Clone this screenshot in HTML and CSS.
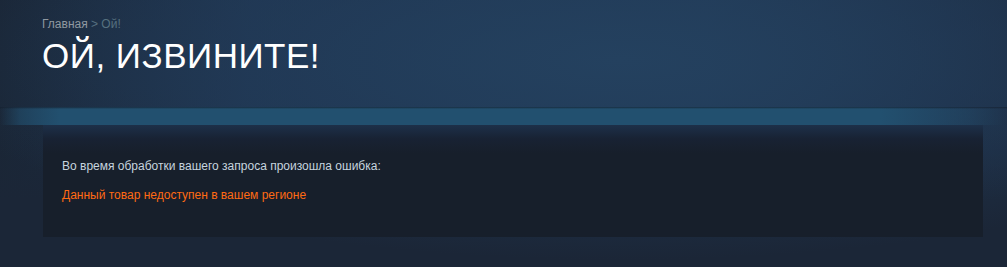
FILE: index.html
```html
<!DOCTYPE html>
<html lang="ru">
<head>
<meta charset="utf-8">
<link rel="stylesheet" href="styles.css">
</head>
<body>
<div class="page">
  <div class="header">
    <div class="breadcrumbs"><span class="crumb">Главная</span> <span class="sep">&gt; Ой!</span></div>
    <h1 class="title">ОЙ, ИЗВИНИТЕ!</h1>
  </div>
  <div class="band">
    <div class="box">
      <p class="msg">Во время обработки вашего запроса произошла ошибка:</p>
      <p class="err">Данный товар недоступен в вашем регионе</p>
    </div>
  </div>
</div>
</body>
</html>
```
FILE: styles.css
```css
html, body { margin: 0; padding: 0; }
body {
  width: 1007px;
  height: 267px;
  overflow: hidden;
  font-family: "Liberation Sans", Arial, sans-serif;
  background: #1b2637;
}
.page {
  height: 267px;
  background:
    radial-gradient(ellipse 700px 200px at 620px 60px, #24415f 0%, rgba(34,60,90,0.6) 50%, rgba(27,38,55,0) 100%),
    linear-gradient(180deg, rgba(27,38,55,0) 0px, rgba(27,38,55,0) 120px, #1b2637 200px),
    linear-gradient(90deg, #1a2636 0%, #1f3550 25%, #223c58 70%, #1d2d43 100%);
  background-color: #1b2637;
}
.header {
  padding: 16px 0 0 42px;
  height: 91px;
  box-sizing: border-box;
}
.breadcrumbs {
  font-size: 12px;
  line-height: 16px;
  color: #8f98a0;
}
.sep { color: #56707f; }
.title {
  margin: 4px 0 0 0;
  font-weight: normal;
  font-size: 35px;
  line-height: 40px;
  color: #ffffff;
  letter-spacing: 0.5px;
}
.band {
  margin-top: 16px;
  padding: 18px 24px 0 43px;
  background:
    linear-gradient(180deg, rgba(20,30,45,0.7) 0px, rgba(20,30,45,0) 2px),
    linear-gradient(90deg, rgba(33,80,112,0) 0px, rgba(34,80,111,0.6) 20px, #22506f 60px, #22506f 880px, rgba(34,72,102,0.5) 970px, rgba(27,40,58,0.1) 1007px);
  background-size: 100% 18px;
  background-repeat: no-repeat;
}
.box {
  height: 112px;
  box-sizing: border-box;
  padding: 33px 19px 0 19px;
  background: linear-gradient(180deg, #1d3049 0%, #182233 50%, #171f2b 100%);
  background-size: 100% 28px;
  background-repeat: no-repeat;
  background-color: #171f2b;
}
.msg {
  margin: 0;
  font-size: 12px;
  line-height: 16px;
  color: #c6d4df;
}
.err {
  margin: 13px 0 0 0;
  font-size: 12px;
  line-height: 16px;
  color: #ff6a13;
}
```
